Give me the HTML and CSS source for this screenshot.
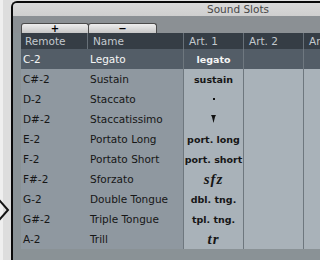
FILE: index.html
```html
<!DOCTYPE html>
<html>
<head>
<meta charset="utf-8">
<link rel="stylesheet" href="styles.css">
</head>
<body>
<div class="screen">
  <div class="side">
    <svg class="chev" width="10" height="22" viewBox="0 0 10 22"><polyline points="-1,1 8,11 -1,21" fill="none" stroke="#111" stroke-width="2"/></svg>
  </div>
  <div class="window">
    <div class="titlebar"><span>Sound Slots</span></div>
    <div class="toolbar">
      <div class="btn btn-first">+</div><div class="btn">−</div>
    </div>
    <div class="table">
      <div class="row head">
        <div class="cell c-remote">Remote</div>
        <div class="cell c-name">Name</div>
        <div class="cell c-art">Art. 1</div>
        <div class="cell c-art">Art. 2</div>
        <div class="cell c-art">Art. 3</div>
        <div class="cell c-art"></div>
      </div>
      <div class="row selected">
        <div class="cell c-remote">C-2</div>
        <div class="cell c-name">Legato</div>
        <div class="cell c-art art1">legato</div>
        <div class="cell c-art"></div><div class="cell c-art"></div><div class="cell c-art"></div>
      </div>
      <div class="row">
        <div class="cell c-remote">C#-2</div>
        <div class="cell c-name">Sustain</div>
        <div class="cell c-art art1">sustain</div>
        <div class="cell c-art"></div><div class="cell c-art"></div><div class="cell c-art"></div>
      </div>
      <div class="row">
        <div class="cell c-remote">D-2</div>
        <div class="cell c-name">Staccato</div>
        <div class="cell c-art art1"><span class="dot"></span></div>
        <div class="cell c-art"></div><div class="cell c-art"></div><div class="cell c-art"></div>
      </div>
      <div class="row">
        <div class="cell c-remote">D#-2</div>
        <div class="cell c-name">Staccatissimo</div>
        <div class="cell c-art art1"><svg class="wedge" width="5" height="8" viewBox="0 0 5 8"><polygon points="0,0 5,0 4,2 2.5,8 1,2" fill="#111"/></svg></div>
        <div class="cell c-art"></div><div class="cell c-art"></div><div class="cell c-art"></div>
      </div>
      <div class="row">
        <div class="cell c-remote">E-2</div>
        <div class="cell c-name">Portato Long</div>
        <div class="cell c-art art1">port. long</div>
        <div class="cell c-art"></div><div class="cell c-art"></div><div class="cell c-art"></div>
      </div>
      <div class="row">
        <div class="cell c-remote">F-2</div>
        <div class="cell c-name">Portato Short</div>
        <div class="cell c-art art1">port. short</div>
        <div class="cell c-art"></div><div class="cell c-art"></div><div class="cell c-art"></div>
      </div>
      <div class="row">
        <div class="cell c-remote">F#-2</div>
        <div class="cell c-name">Sforzato</div>
        <div class="cell c-art art1 dyn">sfz</div>
        <div class="cell c-art"></div><div class="cell c-art"></div><div class="cell c-art"></div>
      </div>
      <div class="row">
        <div class="cell c-remote">G-2</div>
        <div class="cell c-name">Double Tongue</div>
        <div class="cell c-art art1">dbl. tng.</div>
        <div class="cell c-art"></div><div class="cell c-art"></div><div class="cell c-art"></div>
      </div>
      <div class="row">
        <div class="cell c-remote">G#-2</div>
        <div class="cell c-name">Triple Tongue</div>
        <div class="cell c-art art1">tpl. tng.</div>
        <div class="cell c-art"></div><div class="cell c-art"></div><div class="cell c-art"></div>
      </div>
      <div class="row">
        <div class="cell c-remote">A-2</div>
        <div class="cell c-name">Trill</div>
        <div class="cell c-art art1 dyn">tr</div>
        <div class="cell c-art"></div><div class="cell c-art"></div><div class="cell c-art"></div>
      </div>
    </div>
  </div>
</div>
</body>
</html>
```
FILE: styles.css
```css
html, body {
  margin: 0;
  padding: 0;
  width: 320px;
  height: 260px;
  overflow: hidden;
}
body {
  font-family: "DejaVu Sans", sans-serif;
  background: #e0e0e0;
}
.screen {
  display: flex;
  height: 260px;
}
.side {
  flex: none;
  width: 11px;
  background: linear-gradient(to right, #efefef 0, #efefef 3px, #dddddd 3px);
}
.chev {
  display: block;
  margin-top: 199px;
}
.window {
  flex: none;
  width: 470px;
  height: 300px;
  margin-top: 1px;
  border-top: 2px solid #0a0a0a;
  border-left: 2px solid #0a0a0a;
  border-top-left-radius: 6px;
  background: #8a9296;
  overflow: hidden;
}
.titlebar {
  height: 13px;
  width: 450px;
  background: linear-gradient(#d9d9d9, #cfcfcf);
  color: #474747;
  font-size: 10.5px;
  line-height: 13px;
  text-align: center;
}
.toolbar {
  height: 17px;
  display: flex;
  align-items: flex-end;
  padding-left: 8px;
  background: #8b9094;
}
.btn {
  box-sizing: border-box;
  width: 69px;
  height: 10px;
  margin-left: -1px;
  padding-top: 1px;
  border: 1px solid #4b4b4b;
  border-bottom: none;
  border-radius: 3px 3px 0 0;
  background: linear-gradient(#eeeeee, #c6c6c6);
  color: #000;
  font-weight: bold;
  font-size: 10px;
  line-height: 8px;
  text-align: center;
}
.btn-first {
  margin-left: 0;
  width: 68px;
}
.table {
  margin-left: 8px;
}
.row {
  display: grid;
  grid-template-columns: 67px 96px 60px 60px 60px 60px;
  height: 20px;
}
.cell {
  display: flex;
  align-items: center;
  font-size: 10.5px;
  color: #161616;
  white-space: nowrap;
  overflow: hidden;
  border-right: 1px solid #6e777e;
}
.c-remote {
  padding-left: 2px;
  background: #8f98a0;
  border-right-color: #8f98a0;
}
.c-name {
  padding-left: 2px;
  background: #8f98a0;
}
.c-art {
  background: #a9b2b9;
}
.art1 {
  justify-content: center;
  font-weight: bold;
  font-size: 9.5px;
}
.dyn {
  font-family: "Liberation Serif", serif;
  font-style: italic;
  font-weight: bold;
  font-size: 15px;
  letter-spacing: 1px;
}
.dot {
  width: 2px;
  height: 2px;
  background: #111;
}
.wedge {
  display: block;
}
.head {
  height: 16px;
}
.head .cell {
  background: #353d45;
  color: #c3c9ce;
  padding-left: 5px;
  border-right-color: #677078;
}
.head .c-remote {
  padding-left: 4px;
}
.selected .cell {
  background: #535d67;
  color: #f5f5f5;
}
.selected .c-remote {
  border-right-color: #535d67;
}
.selected .c-art {
  border-right-color: #6f7880;
}
```
